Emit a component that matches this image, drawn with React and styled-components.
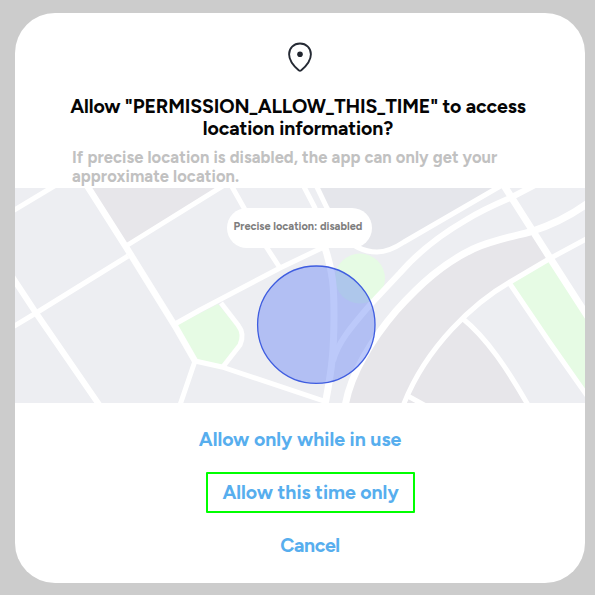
import React from 'react';
import styled, { createGlobalStyle } from 'styled-components';

const GlobalStyle = createGlobalStyle`
  *, *::before, *::after { box-sizing: border-box; }
  body { margin: 0; background: #cccccc; font-family: Figtree, Inter, sans-serif; }
`;

const Backdrop = styled.main`
  width: 595px;
  height: 595px;
  padding: 13px 10px 12px 15px;
  background: #cccccc;
  overflow: hidden;
`;

const Dialog = styled.section`
  width: 570px;
  height: 570px;
  display: flex;
  flex-direction: column;
  background: #ffffff;
  border-radius: 40px;
  overflow: hidden;
`;

const Header = styled.header`
  height: 175px;
  flex: none;
  display: flex;
  flex-direction: column;
  align-items: center;
  padding-top: 28px;
`;

const PinIcon = styled.svg`
  display: block;
  width: 30px;
  height: 32px;
  flex: none;
`;

const Title = styled.h1`
  margin: 22px 0 0;
  padding-right: 4px;
  font-size: 19.5px;
  line-height: 22px;
  font-weight: 700;
  text-align: center;
  color: #050505;
  white-space: nowrap;
`;

const Line = styled.span`
  display: block;
  letter-spacing: ${(p) => p.$spacing}px;
`;

const Description = styled.p`
  align-self: stretch;
  margin: 9px 0 0;
  padding-left: 57px;
  font-size: 16.5px;
  line-height: 19px;
  font-weight: 700;
  color: #c1c1c1;
  white-space: nowrap;
`;

const MapPanel = styled.div`
  position: relative;
  height: 215px;
  flex: none;
`;

const MapDrawing = styled.svg`
  display: block;
  width: 570px;
  height: 215px;
`;

const PrecisionBadge = styled.div`
  position: absolute;
  left: 212px;
  top: 20px;
  width: 145px;
  height: 40px;
  display: flex;
  align-items: center;
  justify-content: center;
  padding: 0 3px 3px 0;
  border-radius: 20px;
  background: #ffffff;
  color: #7d7d7d;
  font-size: 11px;
  font-weight: 700;
  letter-spacing: ${(p) => p.$spacing}px;
  white-space: nowrap;
`;

const Actions = styled.footer`
  flex: 1;
  display: flex;
  flex-direction: column;
  align-items: center;
  padding-top: 16px;
  gap: 12px;
`;

const Action = styled.button`
  width: 209px;
  height: 41px;
  margin-left: ${(p) => p.$shift || 0}px;
  padding: 0 0 2px;
  background: transparent;
  border: 2px solid ${(p) => (p.$highlighted ? '#00ff00' : 'transparent')};
  border-radius: 1px;
  color: #57aeee;
  font-family: inherit;
  font-size: 19.5px;
  line-height: 22px;
  font-weight: 700;
  letter-spacing: ${(p) => p.$spacing}px;
  white-space: nowrap;
`;

function LocationMap() {
  return (
    <MapDrawing viewBox="15 188 570 215" aria-hidden="true">
      <rect x="15" y="188" width="570" height="215" fill="#edeef2" />
      <g fill="#e7e6ea">
        <path d="M88 188L126 246L220 188Z" />
        <path d="M345 403C350 374 373 335 400 308C423 283 448 260 473 250C495 240 515 236 530 232L550 257L510 282C475 304 430 345 403 403Z" />
        <path d="M462 318C487 338 508 370 528 403H403C420 365 438 340 462 318Z" />
      </g>
      <path d="M318 188L341 234Q357 252 377 252Q389 251 404 242L500 188Z" fill="#e5e6eb" />
      <g fill="#e6fbe4">
        <path d="M175 326L218 304L240 330V344L218 369L195 361Z" />
        <path d="M510 282L550 260L585 315V393Z" />
        <circle cx="360" cy="278.5" r="25" />
      </g>
      <g fill="none" stroke="#ffffff" strokeLinejoin="round">
        <path strokeWidth="5" d="M11 212L56 185" />
        <path strokeWidth="6.5" d="M86 184L126 247L175 326L195 361" />
        <path strokeWidth="5" d="M126 246L226 184M11 328L36 313L128 256" />
        <path strokeWidth="6" d="M11 275L36 313L100 406" />
        <path strokeWidth="5" d="M175 324L200 310L280 268L326 246M231 185L244 208L267 248L280 268" />
        <path strokeWidth="5" d="M195 361L180 405M195 361L222 367L324 401" />
        <path strokeWidth="5" d="M221 303L238 325Q245 334 240 345L222 368" />
        <path strokeWidth="5" d="M302 183L315 208L325 248M315 183L327 208L341 234Q357 252 377 252Q389 252 404 242L504 184" />
        <path strokeWidth="7" d="M325 248C333 272 334 287 334 315C334 350 332 369 325 405" />
        <path strokeWidth="6" d="M333 361C338 342 352 326 370 305L400 273C419 251 442 234 466 220Q482 210 510 198L537 184" />
        <path strokeWidth="7" d="M345 407C350 374 373 338 396 311C421 283 444 263 473 249C493 240 515 236 530 232Q562 222 588 203" />
        <path strokeWidth="7" d="M503 184L550 258L588 317" />
        <path strokeWidth="5" d="M588 238L549 259L510 282C475 302 426 346 403 406" />
        <path strokeWidth="5" d="M462 318C487 338 508 370 528 405M510 284L550 343L588 397M406 395L426 406" />
      </g>
      <circle cx="316.3" cy="324.7" r="58.7" fill="#6381f4" fillOpacity="0.43" stroke="#3f5de0" strokeWidth="1.3" />
    </MapDrawing>
  );
}

export default function App() {
  return (
    <>
      <GlobalStyle />
      <Backdrop>
        <Dialog role="dialog">
          <Header>
            <PinIcon viewBox="0 0 30 32" aria-hidden="true">
              <path d="M15 2.5C8.6 2.5 4.1 7.2 4.1 13.2C4.1 20.5 10.3 26.3 13.7 29.2Q15 30.2 16.3 29.2C19.7 26.3 25.9 20.5 25.9 13.2C25.9 7.2 21.4 2.5 15 2.5Z" fill="none" stroke="#252a34" strokeWidth="1.9" />
              <circle cx="15" cy="13.2" r="2.8" fill="#20252e" />
            </PinIcon>
            <Title>
              <Line $spacing={-0.13}>Allow "PERMISSION_ALLOW_THIS_TIME" to access</Line>
              <Line $spacing={-0.08}>location information?</Line>
            </Title>
            <Description>
              <Line $spacing={0.08}>If precise location is disabled, the app can only get your</Line>
              <Line $spacing={0.08}>approximate location.</Line>
            </Description>
          </Header>
          <MapPanel>
            <LocationMap />
            <PrecisionBadge $spacing={0}>Precise location: disabled</PrecisionBadge>
          </MapPanel>
          <Actions>
            <Action $spacing={-0.02}>Allow only while in use</Action>
            <Action $highlighted $shift={21} $spacing={-0.04}>Allow this time only</Action>
            <Action $shift={20} $spacing={-0.4}>Cancel</Action>
          </Actions>
        </Dialog>
      </Backdrop>
    </>
  );
}
